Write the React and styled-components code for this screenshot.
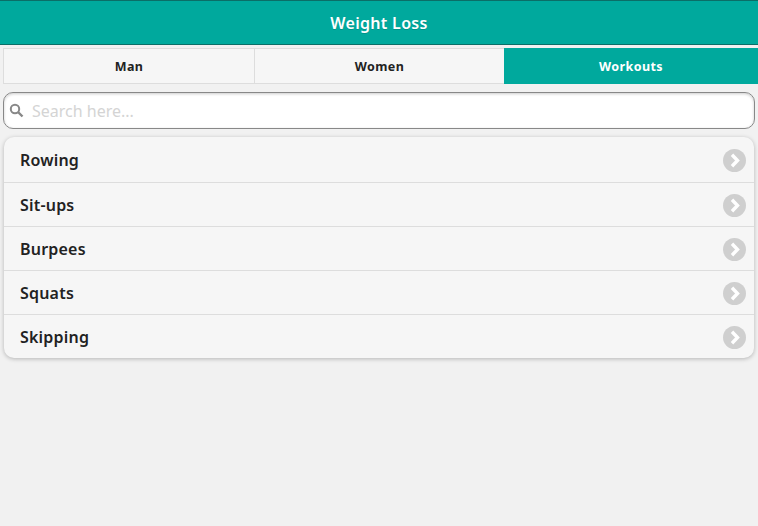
import React from "react";
import styled, { createGlobalStyle } from "styled-components";

const Global = createGlobalStyle`
html, body {
  margin: 0;
  height: 100%;
  background: #f1f1f1;
  font-family: "Noto Sans", "Open Sans", sans-serif;
}
* { box-sizing: border-box; }
`;

const Page = styled.div`
width: 758px;
height: 526px;
overflow: hidden;
background: #f1f1f1;
`;

const Header = styled.header`
height: 45px;
background: #00a99d;
border-top: 1px solid #0b6e67;
border-bottom: 1px solid #0b6e67;
color: #fff;
font-size: 16px;
font-weight: 600;
letter-spacing: 0.3px;
display: flex;
align-items: center;
justify-content: center;
text-shadow: 0 1px 0 rgba(0,0,0,0.15);
`;

const Tabs = styled.nav`
display: grid;
grid-template-columns: 251px 250px 254px;
margin: 3px 0 0 3px;
height: 36px;
`;

const Tab = styled.div`
display: flex;
align-items: center;
justify-content: center;
font-size: 12.5px;
font-weight: 700;
letter-spacing: 0.4px;
color: ${(p) => (p.$active ? "#fff" : "#222")};
background: ${(p) => (p.$active ? "#00a99d" : "#f6f6f6")};
border: ${(p) => (p.$active ? "none" : "1px solid #ddd")};
border-right: none;
`;

const SearchBox = styled.div`
margin: 8px 3px 0;
height: 37px;
display: flex;
align-items: center;
gap: 6px;
padding-left: 5px;
background: #fff;
border: 1px solid #888;
border-radius: 10px;
box-shadow: inset 0 1px 3px rgba(0,0,0,0.2);
color: #888;
`;

const SearchInput = styled.input`
flex: 1;
border: none;
outline: none;
background: transparent;
padding: 1px 2px;
font: 16px "Noto Sans", "Open Sans", sans-serif;
&::placeholder { color: #d4d4d4; opacity: 1; }
`;

const List = styled.ul`
list-style: none;
margin: 8px 4px 0;
padding: 0;
background: #f6f6f6;
border-radius: 10px;
box-shadow: 0 1px 4px rgba(0,0,0,0.25);
`;

const Row = styled.li`
height: 44px;
display: flex;
align-items: center;
justify-content: space-between;
padding: 0 8px 0 16px;
font-size: 16px;
font-weight: 600;
letter-spacing: 0.2px;
color: #222;
border-top: 1px solid #ddd;
&:first-child { border-top: none; height: 45px; }
`;

const Chevron = styled.span`
width: 23px;
height: 23px;
margin-top: 1px;
border-radius: 50%;
background: #cfcfcf;
display: flex;
align-items: center;
justify-content: center;
`;

const SearchIcon = () => (
  <svg width="15" height="15" viewBox="0 0 15 15" fill="none" stroke="currentColor">
    <circle cx="6" cy="6" r="4.2" strokeWidth="2" />
    <path d="M9 9l4.5 4.5" strokeWidth="2.4" />
  </svg>
);

const ArrowIcon = () => (
  <svg width="15" height="15" viewBox="0 0 15 15" fill="none" stroke="#fff" strokeWidth="3.4">
    <path d="M5 1.8L10.5 7.5L5 13.2" />
  </svg>
);

const workouts = ["Rowing", "Sit-ups", "Burpees", "Squats", "Skipping"];

export default function App() {
  return (
    <Page>
      <Global />
      <Header>Weight Loss</Header>
      <Tabs>
        <Tab>Man</Tab>
        <Tab>Women</Tab>
        <Tab $active>Workouts</Tab>
      </Tabs>
      <SearchBox>
        <SearchIcon />
        <SearchInput placeholder="Search here..." />
      </SearchBox>
      <List>
        {workouts.map((name) => (
          <Row key={name}>
            {name}
            <Chevron>
              <ArrowIcon />
            </Chevron>
          </Row>
        ))}
      </List>
    </Page>
  );
}
